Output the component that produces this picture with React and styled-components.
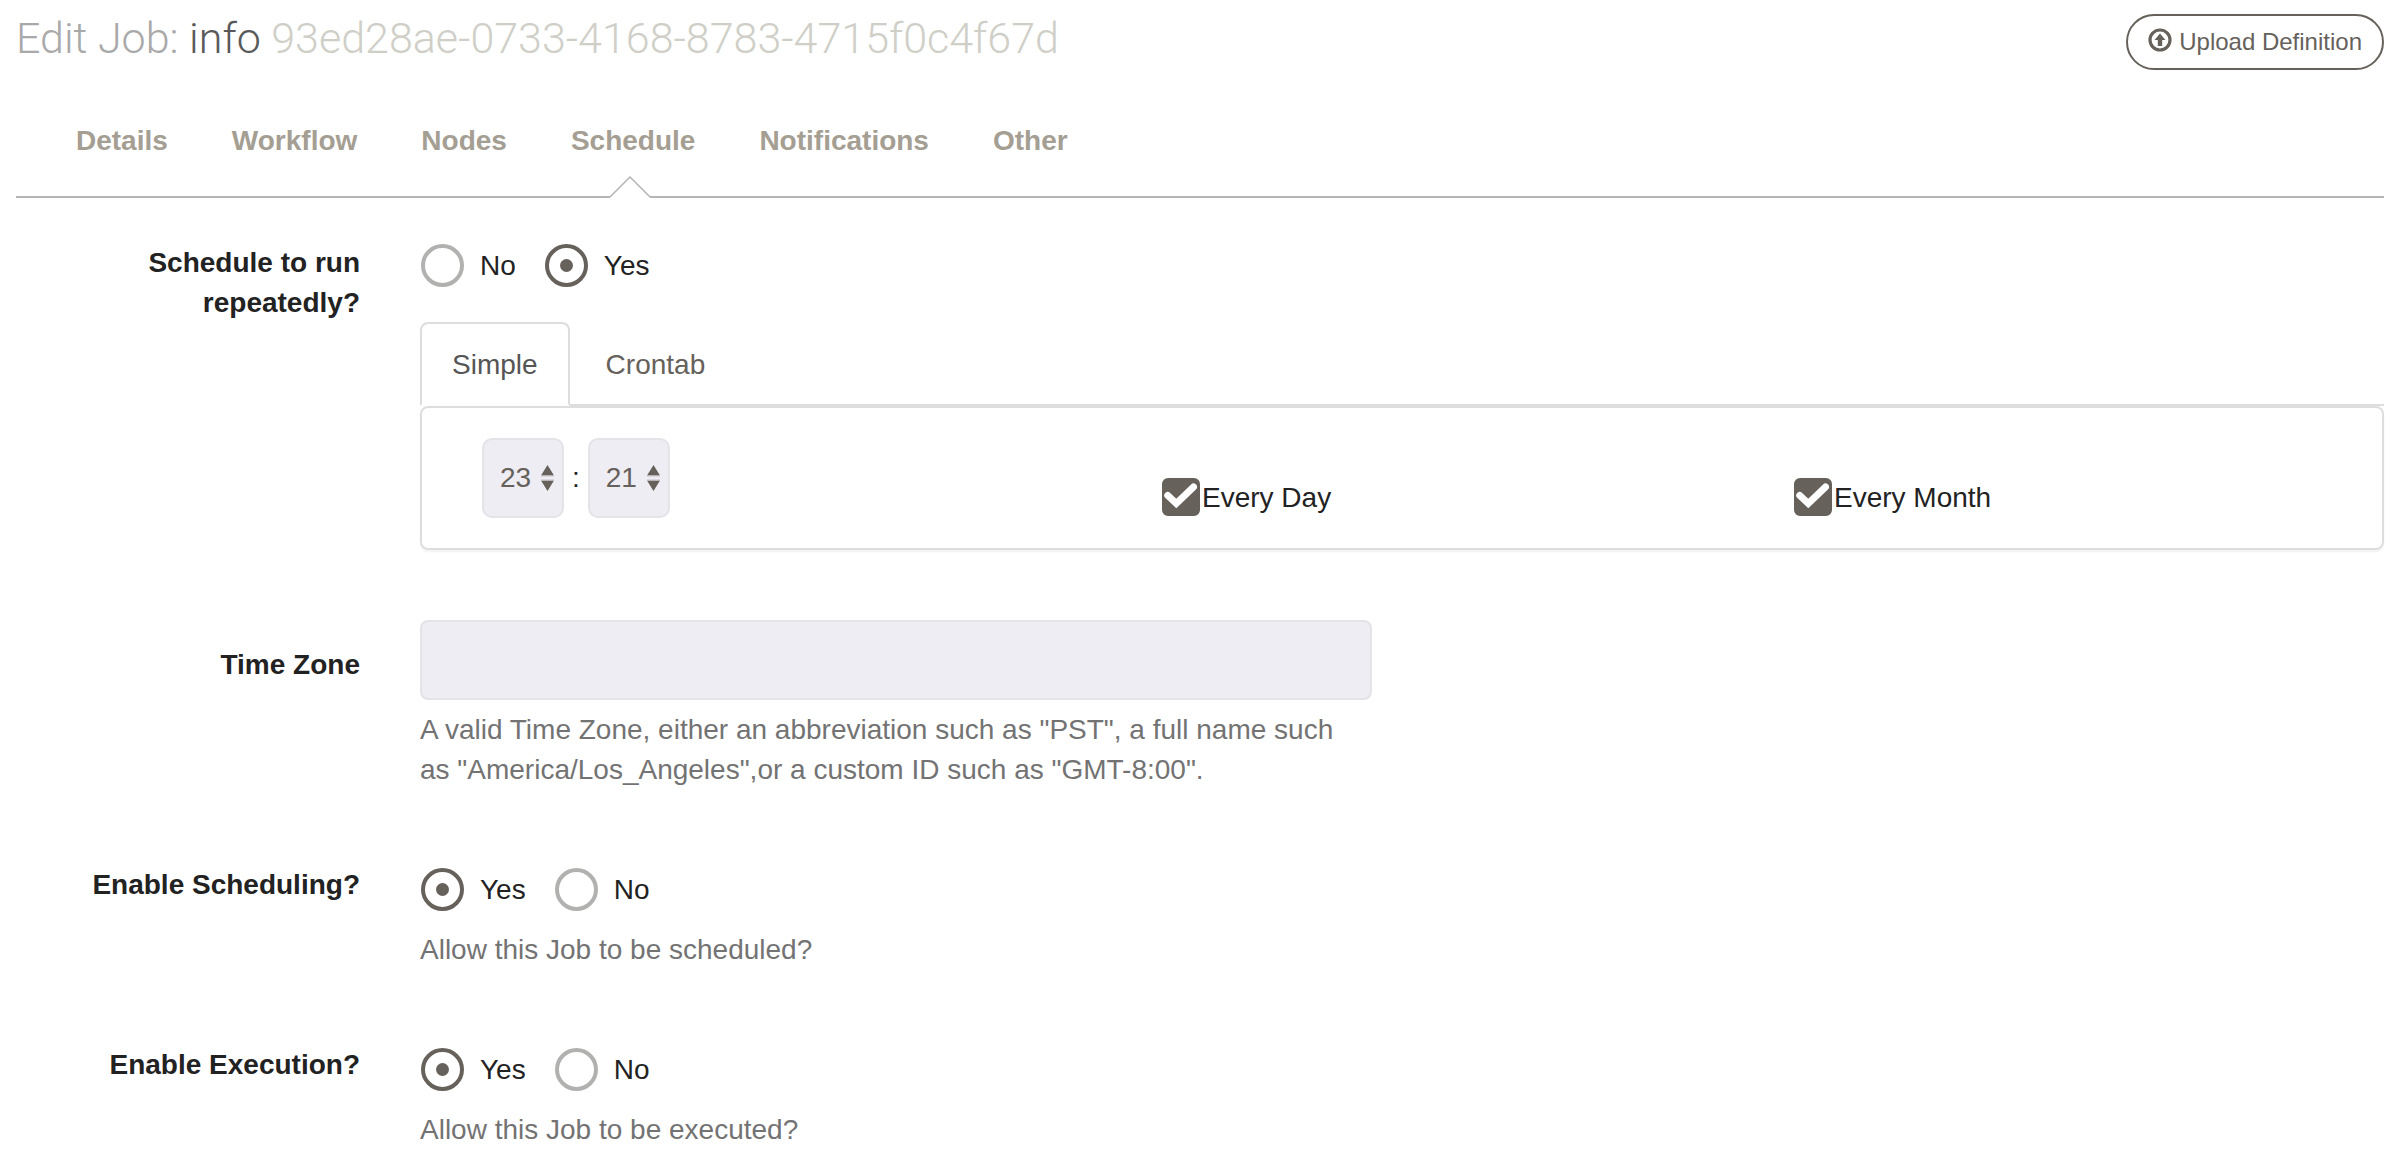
import React from "react";
import styled, { createGlobalStyle } from "styled-components";

const GlobalStyle = createGlobalStyle`
  *, *::before, *::after { box-sizing: border-box; }
  body {
    margin: 0;
    background: #fff;
    color: #222;
    font-family: "Liberation Sans", Arial, Helvetica, sans-serif;
    font-size: 28px;
    line-height: 40px;
  }
`;

const Page = styled.main`
  padding: 14px 18px 20px 16px;
`;

const Header = styled.header`
  display: flex;
  justify-content: space-between;
  align-items: flex-start;
`;

const Title = styled.h1`
  margin: 0;
  color: #a9a9a9;
  font-family: Roboto, "Liberation Sans", sans-serif;
  font-size: 43px;
  font-weight: 300;
  line-height: 48px;
`;

const JobName = styled.span`
  color: #59595b;
`;

const JobId = styled.small`
  color: #cfcfc8;
  font-size: inherit;
`;

const UploadButton = styled.button`
  display: flex;
  align-items: center;
  gap: 7px;
  height: 56px;
  padding: 0 20px;
  border: 2px solid #66615b;
  border-radius: 28px;
  background: transparent;
  color: #66615b;
  font: inherit;
  font-size: 24px;
  white-space: nowrap;
`;

const ButtonIcon = styled.svg`
  width: 24px;
  height: 24px;
  margin-bottom: 4px;
`;

const SectionNav = styled.nav`
  display: flex;
  gap: 64px;
  margin-top: 51px;
  padding: 0 60px;
  border-bottom: 2px solid #b5b5b5;
`;

const SectionLink = styled.a`
  position: relative;
  padding-bottom: 35px;
  color: #a49e93;
  font-weight: bold;
  text-decoration: none;
`;

const Caret = styled.svg`
  position: absolute;
  bottom: -2px;
  left: 50%;
  width: 42px;
  height: 22px;
  margin-left: -24px;
`;

const Form = styled.form`
  display: flex;
  flex-direction: column;
  gap: 70px;
  padding-top: 40px;
`;

const Row = styled.div`
  display: grid;
  grid-template-columns: minmax(0, 344fr) minmax(0, 1964fr);
  column-gap: 60px;
`;

const RowLabel = styled.label`
  padding-top: ${(p) => (p.$input ? 25 : 5)}px;
  font-weight: bold;
  text-align: right;
`;

const RadioGroup = styled.div`
  display: flex;
  gap: 28px;
  padding-top: ${(p) => p.$top}px;
  padding-bottom: 9px;
`;

const Choice = styled.label`
  display: flex;
  align-items: center;
`;

const Radio = styled.input`
  display: grid;
  place-items: center;
  appearance: none;
  width: 43px;
  height: 43px;
  margin: 0 16px 0 1px;
  border: 4px solid #b1b1b0;
  border-radius: 50%;

  &:checked { border-color: #66615b; }
  &:checked::before {
    content: "";
    width: 13px;
    height: 13px;
    border-radius: 50%;
    background: #66615b;
  }
`;

const Help = styled.p`
  margin: 10px 0 0;
  padding-right: 16px;
  color: #737373;
`;

const TabBar = styled.div`
  display: flex;
  gap: 4px;
  margin-top: 26px;
  border-bottom: 2px solid #ddd;
`;

const Tab = styled.a`
  height: 84px;
  margin-bottom: -2px;
  padding: 21px 30px 0;
  border: 2px solid ${(p) => (p.$active ? "#ddd" : "transparent")};
  border-bottom-color: ${(p) => (p.$active ? "#fff" : "transparent")};
  border-radius: 8px 8px 0 0;
  color: ${(p) => (p.$active ? "#555" : "#66615b")};
  text-decoration: none;
`;

const Panel = styled.div`
  display: grid;
  grid-template-columns: 170fr 158fr 147fr;
  padding: 30px 0 30px 60px;
  border: 2px solid #ddd;
  border-radius: 8px;
  box-shadow: 0 2px 2px rgba(0, 0, 0, 0.05);
`;

const TimeFields = styled.div`
  display: flex;
  align-items: center;
  gap: 8px;
`;

const SelectBox = styled.span`
  position: relative;
  display: block;
`;

const Select = styled.select`
  display: block;
  appearance: none;
  width: 82px;
  height: 80px;
  padding: 0 0 0 16px;
  border: 2px solid #e3e3e8;
  border-radius: 10px;
  background: #eeedf3;
  color: #66615b;
  font: inherit;
`;

const Arrows = styled.svg`
  position: absolute;
  top: 27px;
  right: 10px;
  width: 13px;
  height: 26px;
  pointer-events: none;
`;

const CheckChoice = styled.label`
  display: flex;
  align-items: flex-start;
  align-self: end;
  gap: 2px;
`;

const CheckBox = styled.span`
  position: relative;
  display: block;
  width: 38px;
  height: 38px;
`;

const CheckInput = styled.input`
  display: block;
  appearance: none;
  width: 38px;
  height: 38px;
  margin: 0;
  border: 2px solid #66615b;
  border-radius: 6px;

  &:checked { background: #66615b; }
  &:not(:checked) + svg { display: none; }
`;

const CheckMark = styled.svg`
  position: absolute;
  inset: 0;
  width: 38px;
  height: 38px;
  pointer-events: none;
`;

const HalfField = styled.div`
  width: calc((100% + 60px) / 2 - 60px);
`;

const TextInput = styled.input`
  display: block;
  width: 100%;
  height: 80px;
  padding: 0 24px;
  border: 2px solid #e3e3e8;
  border-radius: 8px;
  background: #eeedf3;
  color: #66615b;
  font: inherit;
`;

const sections = ["Details", "Workflow", "Nodes", "Schedule", "Notifications", "Other"];

function YesNo({ name, label, options, value, top = 8 }) {
  return (
    <RadioGroup $top={top} role="radiogroup" aria-labelledby={label}>
      {options.map((option) => (
        <Choice key={option}>
          <Radio type="radio" name={name} value={option} defaultChecked={option === value} />
          {option}
        </Choice>
      ))}
    </RadioGroup>
  );
}

function NumberSelect({ label, count, value }) {
  return (
    <SelectBox>
      <Select aria-label={label} defaultValue={value}>
        {Array.from({ length: count }, (_, i) => (
          <option key={i} value={i}>{String(i).padStart(2, "0")}</option>
        ))}
      </Select>
      <Arrows viewBox="0 0 13 26" aria-hidden="true">
        <path d="M6.5 0 13 10.500H0ZM0 15.500h13L6.5 26Z" fill="#66615b" />
        <path d="M0 11h13M0 15h13" stroke="#c6c3c4" />
      </Arrows>
    </SelectBox>
  );
}

function Check({ children }) {
  return (
    <CheckChoice>
      <CheckBox>
        <CheckInput type="checkbox" defaultChecked />
        <CheckMark viewBox="0 0 38 38" aria-hidden="true">
          <path d="M5.800 17.500 14.300 25.500 31.500 9" fill="none" stroke="#fff" strokeWidth="7" strokeLinecap="round" />
        </CheckMark>
      </CheckBox>
      {children}
    </CheckChoice>
  );
}

export default function App() {
  return (
    <>
      <GlobalStyle />
      <Page>
        <Header>
          <Title>
            Edit Job: <JobName>info</JobName> <JobId>93ed28ae-0733-4168-8783-4715f0c4f67d</JobId>
          </Title>
          <UploadButton type="button">
            <ButtonIcon viewBox="0 0 24 24" aria-hidden="true">
              <circle cx="12" cy="12" r="10" fill="none" stroke="currentColor" strokeWidth="3.200" />
              <path d="M12 5.500 17.500 12H14.200V18H9.800V12H6.500Z" fill="currentColor" />
            </ButtonIcon>
            Upload Definition
          </UploadButton>
        </Header>

        <SectionNav>
          {sections.map((name) => (
            <SectionLink key={name} href={`#${name.toLowerCase()}`}>
              {name}
              {name === "Schedule" && (
                <Caret viewBox="0 0 42 22" aria-hidden="true">
                  <path d="M1 21 21 1 41 21V22H1Z" fill="#fff" />
                  <path d="M1 21 21 1 41 21" fill="none" stroke="#b5b5b5" strokeWidth="1.500" />
                </Caret>
              )}
            </SectionLink>
          ))}
        </SectionNav>

        <Form>
          <Row>
            <RowLabel as="div" id="repeat-label">Schedule to run repeatedly?</RowLabel>
            <div>
              <YesNo name="repeat" label="repeat-label" options={["No", "Yes"]} value="Yes" top={6} />
              <TabBar>
                <Tab href="#simple" $active>Simple</Tab>
                <Tab href="#crontab">Crontab</Tab>
              </TabBar>
              <Panel>
                <TimeFields>
                  <NumberSelect label="Hour" count={24} value={23} />
                  <span>:</span>
                  <NumberSelect label="Minute" count={60} value={21} />
                </TimeFields>
                <Check>Every Day</Check>
                <Check>Every Month</Check>
              </Panel>
            </div>
          </Row>

          <Row>
            <RowLabel htmlFor="timezone" $input>Time Zone</RowLabel>
            <HalfField>
              <TextInput id="timezone" type="text" aria-describedby="timezone-help" />
              <Help id="timezone-help">
                A valid Time Zone, either an abbreviation such as "PST", a full name such
                as "America/Los_Angeles",or a custom ID such as "GMT-8:00".
              </Help>
            </HalfField>
          </Row>

          <Row>
            <RowLabel as="div" id="scheduling-label">Enable Scheduling?</RowLabel>
            <div>
              <YesNo name="scheduling" label="scheduling-label" options={["Yes", "No"]} value="Yes" />
              <Help>Allow this Job to be scheduled?</Help>
            </div>
          </Row>

          <Row>
            <RowLabel as="div" id="execution-label">Enable Execution?</RowLabel>
            <div>
              <YesNo name="execution" label="execution-label" options={["Yes", "No"]} value="Yes" />
              <Help>Allow this Job to be executed?</Help>
            </div>
          </Row>
        </Form>
      </Page>
    </>
  );
}
